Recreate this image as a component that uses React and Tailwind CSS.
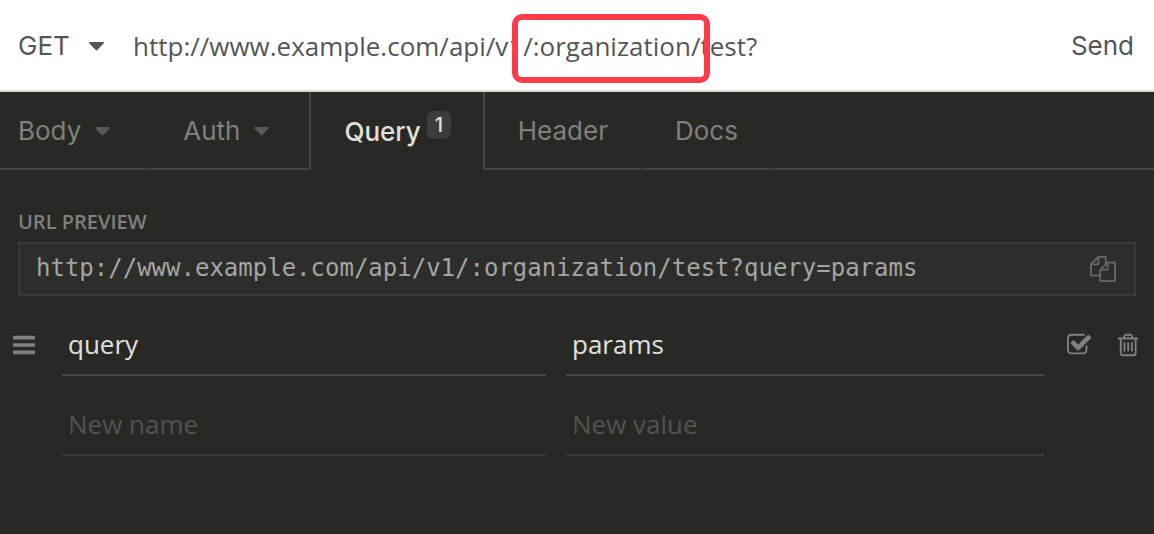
import { useState } from "react";

const ICONS = {
  bars: {
    width: 1536,
    d: "M1536 1344v128q0 26-19 45t-45 19h-1408q-26 0-45-19t-19-45v-128q0-26 19-45t45-19h1408q26 0 45 19t19 45zm0-512v128q0 26-19 45t-45 19h-1408q-26 0-45-19t-19-45v-128q0-26 19-45t45-19h1408q26 0 45 19t19 45zm0-512v128q0 26-19 45t-45 19h-1408q-26 0-45-19t-19-45v-128q0-26 19-45t45-19h1408q26 0 45 19t19 45z",
  },
  copy: {
    width: 1792,
    d: "M1696 384q40 0 68 28t28 68v1216q0 40-28 68t-68 28h-960q-40 0-68-28t-28-68v-288h-544q-40 0-68-28t-28-68v-672q0-40 20-88t48-76l408-408q28-28 76-48t88-20h416q40 0 68 28t28 68v328q68-40 128-40h416zm-544 213l-299 299h299v-299zm-640-384l-299 299h299v-299zm196 647l316-316v-416h-384v416q0 40-28 68t-68 28h-416v640h512v-256q0-40 20-88t48-76zm956 804v-1152h-384v416q0 40-28 68t-68 28h-416v640h896z",
  },
  check: {
    width: 1664,
    d: "M1408 930v318q0 119-84.5 203.5t-203.5 84.5h-832q-119 0-203.5-84.5t-84.5-203.5v-832q0-119 84.5-203.5t203.5-84.5h832q63 0 117 25 15 7 18 23 3 17-9 29l-49 49q-10 10-23 10-3 0-9-2-23-6-45-6h-832q-66 0-113 47t-47 113v832q0 66 47 113t113 47h832q66 0 113-47t47-113v-254q0-13 9-22l64-64q10-10 23-10 6 0 12 3 20 8 20 29zm231-489l-814 814q-24 24-57 24t-57-24l-430-430q-24-24-24-57t24-57l110-110q24-24 57-24t57 24l263 263 647-647q24-24 57-24t57 24l110 110q24 24 24 57t-24 57z",
  },
  trash: {
    width: 1408,
    d: "M512 736v576q0 14-9 23t-23 9h-64q-14 0-23-9t-9-23v-576q0-14 9-23t23-9h64q14 0 23 9t9 23zm256 0v576q0 14-9 23t-23 9h-64q-14 0-23-9t-9-23v-576q0-14 9-23t23-9h64q14 0 23 9t9 23zm256 0v576q0 14-9 23t-23 9h-64q-14 0-23-9t-9-23v-576q0-14 9-23t23-9h64q14 0 23 9t9 23zm128 724v-948h-896v948q0 22 7 40.5t14.5 27 10.5 8.5h832q3 0 10.5-8.5t14.5-27 7-40.5zm-672-1076h448l-48-117q-7-9-17-11h-317q-10 2-17 11zm928 32v64q0 14-9 23t-23 9h-96v948q0 83-47 143.5t-113 60.5h-832q-66 0-113-58.5t-47-141.5v-952h-96q-14 0-23-9t-9-23v-64q0-14 9-23t23-9h309l70-167q15-37 54-63t79-26h320q40 0 79 26t54 63l70 167h309q14 0 23 9t9 23z",
  },
};

function Icon({ name, className }) {
  const icon = ICONS[name];
  return (
    <svg aria-hidden="true" viewBox={`0 0 ${icon.width} 1792`} className={`h-[26px] w-auto fill-current ${className ?? ""}`}>
      <path d={icon.d} />
    </svg>
  );
}

function Caret({ className }) {
  return (
    <svg aria-hidden="true" viewBox="0 0 15 9" className={`h-[9px] w-[15px] shrink-0 fill-current ${className ?? ""}`}>
      <path d="M1 0h13q.6 0 .9.5t-.3 1.1L8.300 8.100q-.8.7-1.600 0L.4 1.600Q-.2 1 .1.500T1 0z" />
    </svg>
  );
}

const TABS = [
  { label: "Body", menu: true },
  { label: "Auth", menu: true },
  { label: "Query", count: 1 },
  { label: "Header" },
  { label: "Docs" },
];

function Tab({ tab, first, active, onSelect }) {
  return (
    <button
      type="button"
      role="tab"
      aria-selected={active}
      onClick={onSelect}
      className={`flex items-center border-r-2 pt-0.5 ${first ? "pl-[18px]" : "pl-[33px]"} ${tab.menu ? "pr-[38px]" : "pr-8"} ${
        active
          ? "border-l-2 border-[#464644] font-medium text-[#e0e0de]"
          : "border-b-2 border-x-transparent border-b-[#464644] text-[#80807e]"
      }`}
    >
      {tab.label}
      {tab.menu && <Caret className="ml-3.5 text-[#575755]" />}
      {tab.count && (
        <span className="mb-3.5 ml-1.5 flex h-7 w-6 items-center justify-center rounded-md bg-[#3c3c3a] text-xl">
          {tab.count}
        </span>
      )}
    </button>
  );
}

function Field({ label, ...props }) {
  return (
    <input
      aria-label={label}
      className="h-[60px] w-full min-w-0 border-b-2 bg-transparent px-1.5 pb-0.5 outline-none placeholder:text-[#525250] border-[#3a3a38] not-placeholder-shown:border-[#464644]"
      {...props}
    />
  );
}

const ROW = "grid grid-cols-[62px_504fr_478fr_110px]";

export default function App() {
  const [active, setActive] = useState("Query");
  return (
    <div className="flex min-h-screen flex-col bg-[#282925] font-['Open_Sans',sans-serif] text-[26px] leading-9">
      <header className="relative flex h-[92px] items-center border-b-2 border-[#d9d9d9] bg-white pt-0.5 text-[#555]">
        <div className="relative flex items-center font-[Inter,sans-serif]">
          <select aria-label="Method" className="w-[120px] appearance-none bg-transparent pl-[18px] outline-none">
            <option>GET</option>
            <option>POST</option>
            <option>PUT</option>
            <option>DELETE</option>
          </select>
          <Caret className="pointer-events-none absolute right-4" />
        </div>
        <input
          aria-label="Request URL"
          defaultValue="http://www.example.com/api/v1/:organization/test?"
          className="min-w-0 flex-1 bg-transparent pl-[13px] outline-none"
        />
        <button type="button" className="px-5 font-[Inter,sans-serif]">
          Send
        </button>
        <div className="pointer-events-none absolute top-3.5 left-[512px] h-[69px] w-[198px] rounded-[10px] border-6 border-[#fe3b4b]" />
      </header>

      <div role="tablist" className="flex h-[78px] font-[Inter,sans-serif]">
        {TABS.map((tab, i) => (
          <Tab
            key={tab.label}
            tab={tab}
            first={i === 0}
            active={tab.label === active}
            onSelect={() => setActive(tab.label)}
          />
        ))}
        <div className="flex-1 border-b-2 border-[#464644]" />
      </div>

      <main className="pt-[38px]">
        <section className="px-[18px]">
          <h2 className="pb-1.5 text-xl leading-7 font-semibold text-[#80807e]">URL PREVIEW</h2>
          <div className="flex h-[54px] items-center justify-between border-2 border-[#3a3a39] bg-[#2d2d2c] pr-[18px] pl-4">
            <code className="pb-0.5 font-['DejaVu_Sans_Mono',monospace] text-2xl text-[#a5a5a3]">
              http://www.example.com/api/v1/:organization/test?query=params
            </code>
            <button type="button" aria-label="Copy URL" className="text-[#666664]">
              <Icon name="copy" />
            </button>
          </div>
        </section>

        <ul className="flex flex-col gap-5 pt-5 text-[#e0e0de]">
          <li className={ROW}>
            <button type="button" aria-label="Reorder" className="flex items-center pb-0.5 pl-[13px] text-[#80807e]">
              <Icon name="bars" />
            </button>
            <div className="pr-5">
              <Field label="Name" defaultValue="query" placeholder="New name" />
            </div>
            <Field label="Value" defaultValue="params" placeholder="New value" />
            <div className="flex items-center justify-between pr-4 pb-0.5 pl-[23px] text-[#80807e]">
              <button type="button" aria-label="Disable">
                <Icon name="check" />
              </button>
              <button type="button" aria-label="Delete">
                <Icon name="trash" />
              </button>
            </div>
          </li>
          <li className={ROW}>
            <div className="col-start-2 pr-5">
              <Field label="New name" placeholder="New name" />
            </div>
            <Field label="New value" placeholder="New value" />
          </li>
        </ul>
      </main>
    </div>
  );
}
